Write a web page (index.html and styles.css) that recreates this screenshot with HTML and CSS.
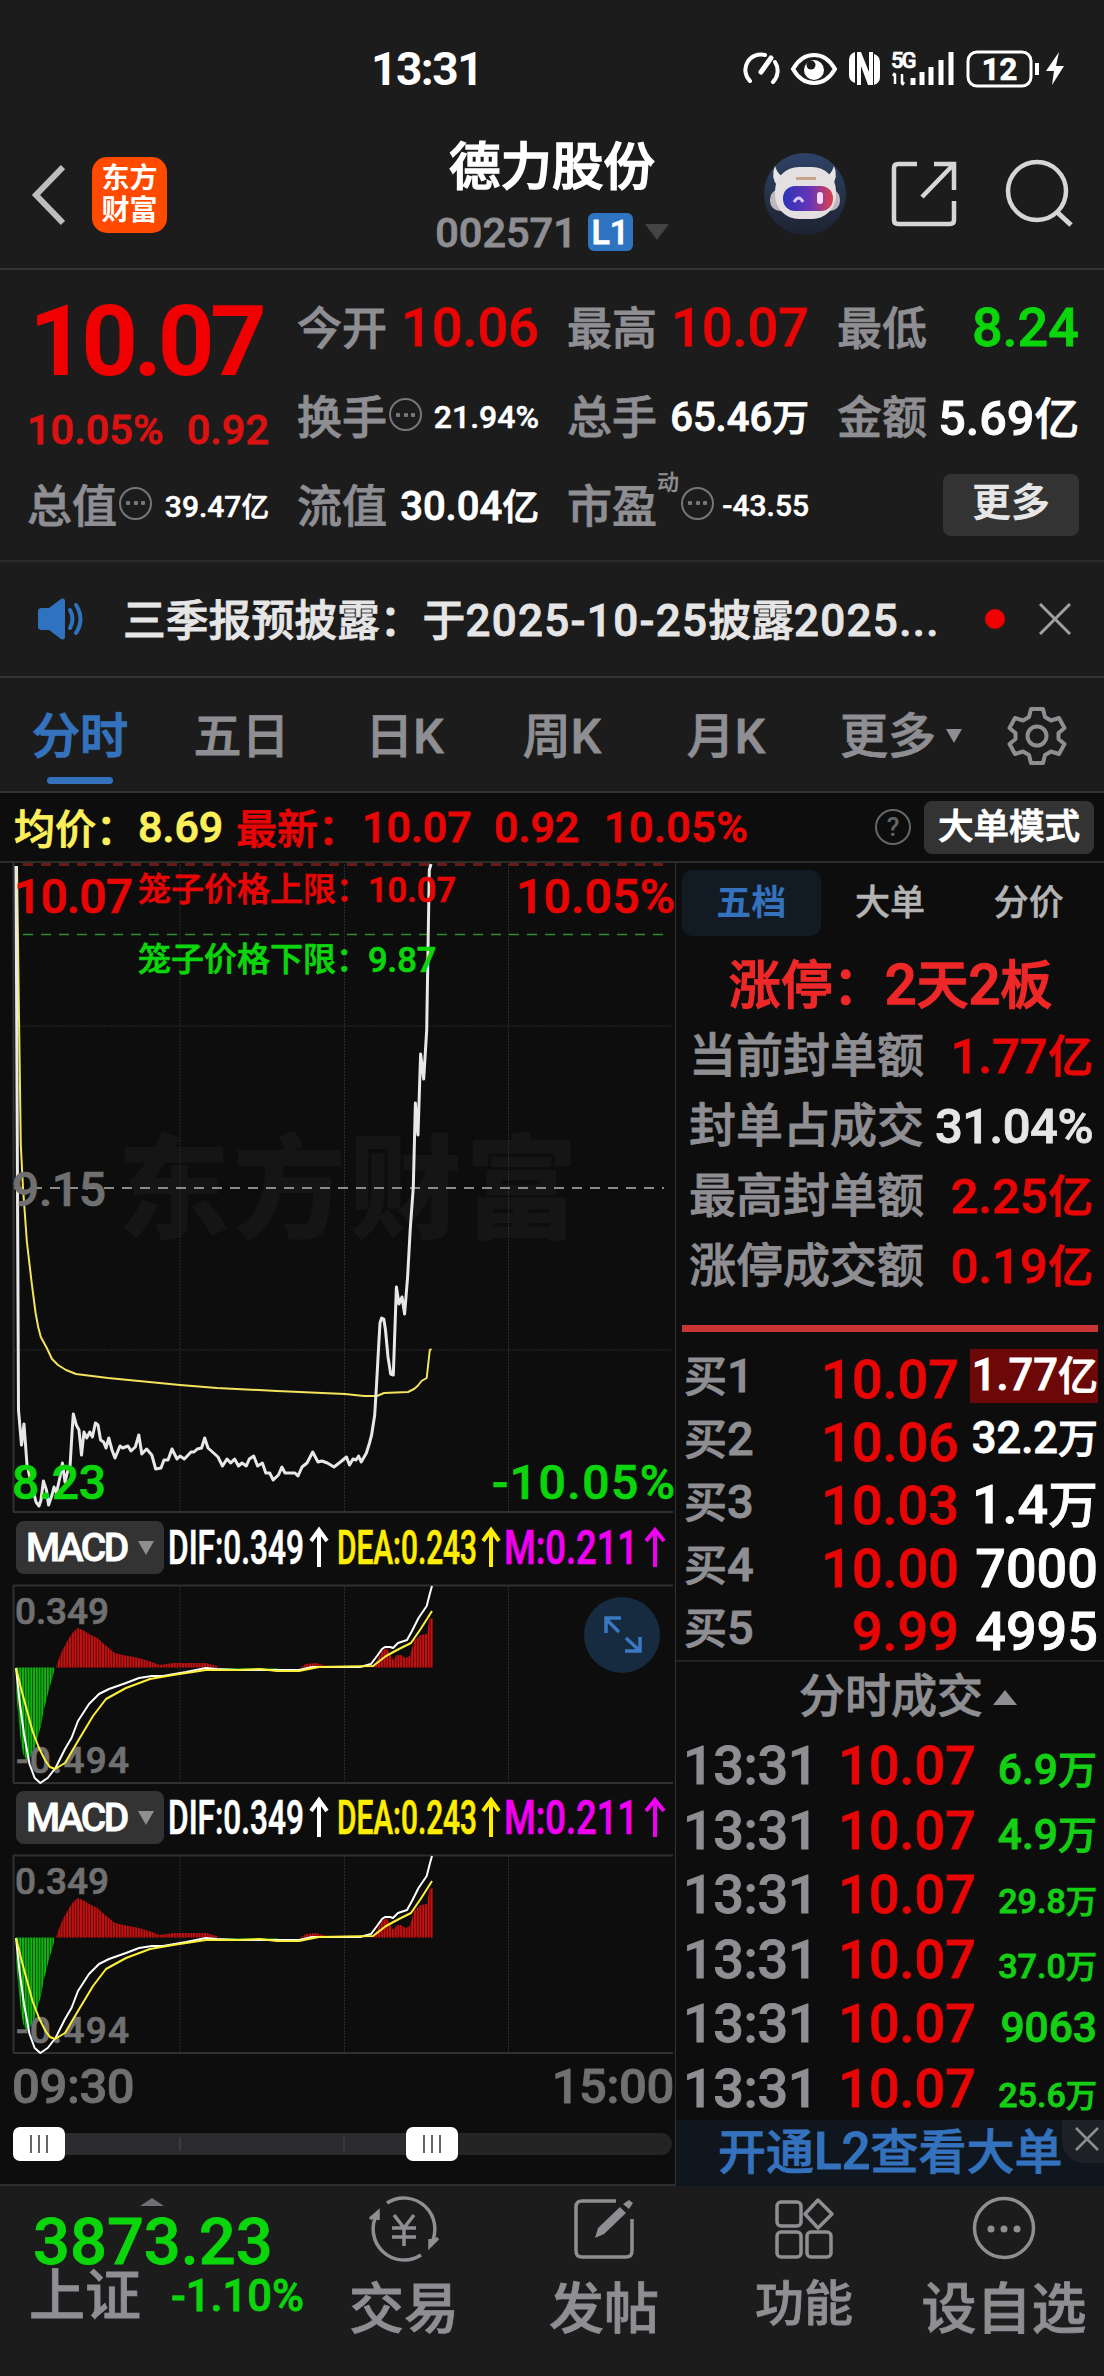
FILE: index.html
```html
<!DOCTYPE html>
<html lang="zh-CN">
<head>
    <meta charset="UTF-8">
    <meta name="viewport" content="width=device-width, initial-scale=1.0">
    <title>德力股份 002571</title>
    <link rel="stylesheet" href="styles.css">
</head>
<body>
    <!-- Status bar -->
    <div class="status-bar">
        <span class="clock">13:31</span>
        <svg class="status-icons" width="330" height="40" viewBox="740 48 330 40">
            <g fill="none" stroke="#fff" stroke-width="4" stroke-linecap="round">
                <path d="M750 80a15.500 15.500 0 0 1 15-26M775 61a16 16 0 0 1-2 20"/>
                <path d="M761 71L771 57" stroke-width="5"/>
                <path d="M793 68q8-14 21-14t21 14q-8 14-21 14t-21-14z"/>
            </g>
            <circle cx="814" cy="69" r="10" fill="#fff"/>
            <circle cx="811" cy="64" r="4.500" fill="#1c1c1c"/>
            <path d="M855 51v31q-6-2-6-8V59q0-6 6-8zM874 84V53q6 2 6 8v15q0 6-6 8zM857 51h4l8 20V51h4v33h-5l-7-19v19h-4z" fill="#fff"/>
            <text x="891" y="67" class="net">5G</text>
            <path d="M895 73v10M893 75l2-3M902 73v10M904 81l-2 3" stroke="#fff" stroke-width="2.500" fill="none"/>
            <path d="M913 77v7M922 71v13M931 66v18M941 59v25M951 51v33" stroke="#fff" stroke-width="5"/>
            <rect x="968" y="51" width="63" height="34" rx="9" fill="none" stroke="#fff" stroke-width="3"/>
            <text x="999.500" y="79" class="batt">12</text>
            <path d="M1037 62v12" stroke="#fff" stroke-width="4"/>
            <path d="M1059 51l-13 19h8l-2 14 12-19h-8z" fill="#fff"/>
        </svg>
    </div>

    <!-- Title bar -->
    <div class="header">
        <svg class="back" width="36" height="62" viewBox="0 0 36 62"><path d="M34 3L7 31l27 28" fill="none" stroke="#bdbdbd" stroke-width="6"/></svg>
        <div class="logo"><span>东方</span><span>财富</span></div>
        <div class="title">
            <h1>德力股份</h1>
            <div class="code"><span>002571</span><b>L1</b><i class="tri-down"></i></div>
        </div>
        <svg class="robot" width="84" height="84" viewBox="0 0 84 84">
            <defs>
                <linearGradient id="sky" x1="0" y1="0" x2="0" y2="1"><stop offset="0" stop-color="#2f4266"/><stop offset="1" stop-color="#1d2330"/></linearGradient>
                <linearGradient id="visor"><stop offset="0" stop-color="#2a33b8"/><stop offset=".55" stop-color="#6a35b5"/><stop offset="1" stop-color="#e0404e"/></linearGradient>
            </defs>
            <circle cx="42" cy="42" r="41" fill="url(#sky)"/>
            <path d="M12 14q-5 11 3 21l9-8q-9-3-12-13zM71 14q5 11-3 21l-9-8q9-3 12-13z" fill="#e9e6e6"/>
            <rect x="7" y="37" width="70" height="22" rx="10" fill="#bdb8bd"/>
            <rect x="12" y="15" width="61" height="52" rx="24" fill="#e4e0e2"/>
            <rect x="20" y="34" width="50" height="25" rx="12" fill="url(#visor)"/>
            <rect x="33" y="25" width="20" height="3" fill="#c9a48c"/>
            <path d="M31 50q5-8 9 0" fill="none" stroke="#d8c8ff" stroke-width="3"/>
            <rect x="54" y="40" width="6" height="12" rx="3" fill="#f3dcff"/>
        </svg>
        <svg class="share" width="66" height="66" viewBox="0 0 66 66"><path d="M26 3H7q-4 0-4 4v52q0 4 4 4h52q4 0 4-4V40M43 3h20v26M63 3L31 36" fill="none" stroke="#d6d6d6" stroke-width="4.500"/></svg>
        <svg class="search" width="68" height="70" viewBox="0 0 68 70"><circle cx="32" cy="33" r="29" fill="none" stroke="#d6d6d6" stroke-width="4.500"/><path d="M52 54l14 13" stroke="#d6d6d6" stroke-width="5"/></svg>
    </div>

    <!-- Quote -->
    <div class="quote">
        <div class="price">
            <div class="last">10.07</div>
            <div class="change"><span>10.05%</span><span>0.92</span></div>
        </div>
        <div class="cell"><label>今开</label><em class="lg red">10.06</em></div>
        <div class="cell"><label>最高</label><em class="lg red">10.07</em></div>
        <div class="cell"><label>最低</label><em class="lg green">8.24</em></div>
        <div class="cell"><label>换手<i class="more"></i></label><em class="sm">21.94%</em></div>
        <div class="cell"><label>总手</label><em class="md">65.46<small>万</small></em></div>
        <div class="cell"><label>金额</label><em class="ml">5.69<small>亿</small></em></div>
        <div class="cell"><label>总值<i class="more"></i></label><em class="xs">39.47<small>亿</small></em></div>
        <div class="cell"><label>流值</label><em class="md">30.04<small>亿</small></em></div>
        <div class="cell"><label>市盈<sup>动</sup><i class="more"></i></label><em class="xs">-43.55</em></div>
        <div class="cell end"><span class="more-btn">更多</span></div>
    </div>

    <!-- Notice -->
    <div class="notice">
        <svg width="52" height="44" viewBox="0 0 52 44"><path d="M1 14q0-3 4-3h7L24 2q4-2 4 3v34q0 5-4 3L12 33H5q-4 0-4-3z" fill="#2f72c0"/><path d="M33 13q5 9 0 18M39 8q9 14 0 28" fill="none" stroke="#2f72c0" stroke-width="4" stroke-linecap="round"/></svg>
        <p>三季报预披露：于<span>2025-10-25</span>披露<span>2025...</span></p>
        <i class="dot"></i>
        <svg width="32" height="32" viewBox="0 0 32 32"><path d="M1 1l30 30M31 1L1 31" stroke="#a0a0a0" stroke-width="3"/></svg>
    </div>

    <!-- Period tabs -->
    <div class="tabs">
        <span class="active">分时</span>
        <span>五日</span>
        <span>日K</span>
        <span>周K</span>
        <span>月K</span>
        <span>更多<i></i></span>
        <svg width="60" height="60" viewBox="-30 -30 60 60"><path d="M-6-27H6L8-19 14-15.500 22-18 27.500-8 21.500-3V3L27.500 8 22 18 14 15.500 8 19 6 27H-6L-8 19-14 15.500-22 18-27.500 8-21.500 3V-3L-27.500-8-22-18-14-15.500-8-19Z" fill="none" stroke="#8e8e93" stroke-width="4" stroke-linejoin="round"/><circle r="9.500" fill="none" stroke="#8e8e93" stroke-width="4"/></svg>
    </div>

    <!-- Average / latest -->
    <div class="avg">
        <span class="yellow">均价：</span><em class="yellow a1">8.69</em>
        <span class="red">最新：</span><em class="red a2">10.07</em><em class="red a3">0.92</em><em class="red a4">10.05%</em>
        <i class="help">?</i>
        <b class="mode">大单模式</b>
    </div>

    <div class="main">
        <!-- Charts -->
        <div class="charts">
            <svg class="trend" width="675" height="651" viewBox="0 863 675 651">
                <text x="117" y="1229" class="mark" textLength="461">东方财富</text>
                <path d="M180 864V1511M344.500 864V1511M508.500 864V1511M14 1026H672M14 1350H672" class="grid"/>
                <path d="M13.500 863V1512M13 1512H673" class="frame"/>
                <path d="M23 864.500H664" stroke="#6b1a1a" stroke-width="3" stroke-dasharray="10 8"/>
                <path d="M23 934.500H664" stroke="#2f8f2f" stroke-width="1.500" stroke-dasharray="10 8"/>
                <path d="M14 1188H664" stroke="#8a8a8a" stroke-width="2" stroke-dasharray="10 8"/>
                <polyline class="avg-line" points="17,866 19,1017 20.800,1145 23,1188 26.900,1242 31.700,1283 35.600,1313 38.200,1327 40.800,1337 46.800,1348 52,1359 58,1365 66,1370 76,1374 108,1378 139,1381 180,1385 217,1388 277,1391 345,1394 364,1396 377,1396 384,1393 408,1392 414,1389 417.600,1386 421.500,1381 426.700,1378 429.800,1350 431.500,1349"/>
                <polyline class="price-line" points="16,866 17.500,1189 18.500,1410 21.500,1445 24,1424 27,1465 31,1482 36,1502 39,1506 41,1500 43.400,1481 46.400,1490 48.600,1505 52,1495 54,1487 56.400,1493 60,1477 62.400,1463 65,1482 68,1470 70,1467 72,1433 73.300,1414 76.300,1425 79,1430 81.500,1455 84,1432 86.700,1438 89.800,1432 92.400,1437 95.400,1423 98,1425 100.600,1440 103.600,1442 106,1448 108.800,1438 112,1450 115,1458 120,1446 122.700,1448 128,1446 131,1451 135.300,1447 138.800,1435 141.800,1454 146.600,1449 151.800,1455 155.700,1469 161,1468 164,1460 168,1460 172,1449 177,1459 180,1456 184.300,1459 191,1452 194,1452 197.300,1449 201.600,1448 204.700,1438 208,1448 212.500,1452 218,1457 222.500,1466 227,1459 230.700,1463 234.600,1459 238.500,1466 242,1463 246.300,1466 249.300,1459 253.700,1456 257.600,1466 262.400,1463 265.800,1473 269.700,1473 273.200,1480 278.400,1475 281.900,1467 285,1473 295,1473 298,1476 302,1467 307,1463 312.700,1452 318,1462 321.800,1461 327.400,1463 334,1467 340.400,1462 346.500,1457 349.500,1465 353,1459 356,1460 358.600,1456 361.200,1462 366.400,1453 369.500,1443 371.600,1435 374.700,1415 376.400,1387 378.600,1347 380,1323 381.600,1318 383.800,1319 385.500,1330 388,1357 390.700,1374 393.300,1375 395,1327 396.400,1287 399,1304 402,1297 404.600,1314 407.600,1277 410.200,1230 413.300,1187 415.400,1103 418,1135 420.600,1054 423.700,1079 426.700,1030 428,950 429.300,870 431,864"/>
                <text x="14" y="913" class="axis red" textLength="119">10.07</text>
                <text x="516" y="913" class="axis red" textLength="159">10.05%</text>
                <text x="138" y="901" class="cage red">笼子价格上限：</text>
                <text x="368" y="902" class="cage-num red">10.07</text>
                <text x="138" y="971" class="cage green">笼子价格下限：</text>
                <text x="368" y="972" class="cage-num green">9.87</text>
                <text x="12" y="1206" class="axis gray" textLength="94">9.15</text>
                <text x="12" y="1499" class="axis green" textLength="94">8.23</text>
                <text x="492" y="1499" class="axis green" textLength="183">-10.05%</text>
            </svg>

            <div class="macd">
                <div class="macd-bar">
                    <span class="macd-btn">MACD<i></i></span>
                    <svg width="506" height="56" viewBox="166 1520 506 56">
                        <g class="macd-num">
                            <text x="168" y="1564" class="dif" textLength="136" lengthAdjust="spacingAndGlyphs">DIF:0.349</text>
                            <text x="337" y="1564" class="dea" textLength="140" lengthAdjust="spacingAndGlyphs">DEA:0.243</text>
                            <text x="504" y="1564" class="m" textLength="134" lengthAdjust="spacingAndGlyphs">M:0.211</text>
                        </g>
                        <g fill="none" stroke-width="4">
                            <path d="M319 1567V1530M311 1541l8-11 8 11" stroke="#fff"/>
                            <path d="M491 1567V1530M483 1541l8-11 8 11" stroke="#ffee00"/>
                            <path d="M655 1567V1530M646 1541l9-11 9 11" stroke="#f000f0"/>
                        </g>
                    </svg>
                </div>
                <svg class="macd-chart" width="675" height="202" viewBox="0 1582 675 202">
                    <defs>
                        <pattern id="rbar" width="2.760" height="10" patternUnits="userSpaceOnUse"><rect width="2" height="10" fill="#c81010"/><rect x="2" width=".76" height="10" fill="#500a0a"/></pattern>
                        <pattern id="gbar" width="2.760" height="10" patternUnits="userSpaceOnUse"><rect width="2" height="10" fill="#10b410"/><rect x="2" width=".76" height="10" fill="#0a4a0a"/></pattern>
                    </defs>
                    <g id="macdPlot">
                        <path d="M180 1585V1781M344.500 1585V1781M508.500 1585V1781" class="grid"/>
                        <path d="M673 1584.500H13.500V1782M13 1782H673" class="frame"/>
                        <path d="M16 1666.500V1690L18 1712 21 1742 23.500 1754 27 1760 31 1755 34.700 1747 38 1735 41 1725 43.500 1710 46.500 1699 49 1688 51.600 1680 54 1671V1666.500Z" fill="url(#gbar)"/>
                        <path d="M218 1667h60v2h-60z" fill="#0d6a0d"/>
                        <path d="M56 1666.500L57 1663 60 1655 63 1648 68 1639 73 1631 78 1627 84.500 1630 91 1634 97.500 1637 104 1643 115 1652 123.600 1654 138.800 1657 152 1661 159.600 1664 173.500 1662 206 1662 217 1665 220 1666.500H300L306 1663 316 1662 326 1665 330 1666.500H372L375 1663 381.600 1650 386.800 1647 390.300 1654 393.300 1659 396.800 1654 401 1654 405.500 1657 409.800 1655 414 1640 420.600 1634 427 1633 429.300 1618 433 1617V1666.500Z" fill="url(#rbar)"/>
                        <text x="15" y="1623" class="val" textLength="94">0.349</text>
                        <text x="16" y="1772" class="val" textLength="113">-0.494</text>
                        <polyline stroke="#fff" points="16,1667 19.500,1700 24,1733 29.500,1763 34.700,1777 40.300,1782 47.700,1777 55.500,1767 65,1748 71.500,1737 78,1720 89,1703 99,1693 109,1688 126,1682 139,1677 152,1675 163,1675 186,1671 206,1667 217,1668 238,1669 269,1669 299,1669 312,1666 360,1666 371,1663 377,1655 382,1648 385,1646 390,1646 393,1647 398,1642 407,1639 412,1630 418.500,1617 426.700,1605 430,1592 432,1585"/>
                        <polyline stroke="#fdf03c" points="16,1667 21.700,1690 32.500,1730 39,1747 45.500,1760 50,1766 55,1768 65,1762 78,1740 93,1715 106,1698 126,1687 150,1678 173,1674 206,1669 238,1669 260,1668 277,1670 299,1670 319,1666 373,1665 386,1655 399,1648 411,1642 420.600,1628 427,1618 432,1610"/>
                    </g>
                </svg>
                <svg class="expand" width="76" height="76" viewBox="-38 -38 76 76"><circle r="38" fill="#172b40"/><path d="M-16-2V-17H-1M-16-16L-3-3M18 2V16H3M17 15L4 3" fill="none" stroke="#3a78c3" stroke-width="3.500"/></svg>
            </div>

            <div class="macd">
                <div class="macd-bar">
                    <span class="macd-btn">MACD<i></i></span>
                    <svg width="506" height="56" viewBox="166 1520 506 56">
                        <g class="macd-num">
                            <text x="168" y="1564" class="dif" textLength="136" lengthAdjust="spacingAndGlyphs">DIF:0.349</text>
                            <text x="337" y="1564" class="dea" textLength="140" lengthAdjust="spacingAndGlyphs">DEA:0.243</text>
                            <text x="504" y="1564" class="m" textLength="134" lengthAdjust="spacingAndGlyphs">M:0.211</text>
                        </g>
                        <g fill="none" stroke-width="4">
                            <path d="M319 1567V1530M311 1541l8-11 8 11" stroke="#fff"/>
                            <path d="M491 1567V1530M483 1541l8-11 8 11" stroke="#ffee00"/>
                            <path d="M655 1567V1530M646 1541l9-11 9 11" stroke="#f000f0"/>
                        </g>
                    </svg>
                </div>
                <svg class="macd-chart" width="675" height="202" viewBox="0 1582 675 202"><use href="#macdPlot"/></svg>
            </div>

            <div class="times"><span>09:30</span><span>15:00</span></div>
            <div class="slider">
                <i class="handle"></i>
                <i class="tick"></i>
                <i class="tick"></i>
                <i class="handle right"></i>
            </div>
        </div>

        <!-- Order book -->
        <div class="book">
            <div class="book-tabs"><span class="active">五档</span><span>大单</span><span>分价</span></div>
            <div class="limit">涨停：<em>2</em>天<em>2</em>板</div>
            <div class="stat"><span>当前封单额</span><em class="red">1.77<small>亿</small></em></div>
            <div class="stat"><span>封单占成交</span><em class="tight">31.04%</em></div>
            <div class="stat"><span>最高封单额</span><em class="red">2.25<small>亿</small></em></div>
            <div class="stat"><span>涨停成交额</span><em class="red">0.19<small>亿</small></em></div>
            <div class="bar"></div>
            <div class="buys">
                <div class="buy"><span>买<b>1</b></span><em class="red">10.07</em><em class="vol s hot">1.77<small>亿</small></em></div>
                <div class="buy"><span>买<b>2</b></span><em class="red">10.06</em><em class="vol s">32.2<small>万</small></em></div>
                <div class="buy"><span>买<b>3</b></span><em class="red">10.03</em><em class="vol">1.4<small>万</small></em></div>
                <div class="buy"><span>买<b>4</b></span><em class="red">10.00</em><em class="vol">7000</em></div>
                <div class="buy"><span>买<b>5</b></span><em class="red">9.99</em><em class="vol">4995</em></div>
            </div>
            <div class="deals-title">分时成交<i></i></div>
            <div class="deals">
                <div><span>13:31</span><em>10.07</em><b>6.9<small>万</small></b></div>
                <div><span>13:31</span><em>10.07</em><b>4.9<small>万</small></b></div>
                <div><span>13:31</span><em>10.07</em><b class="s">29.8<small>万</small></b></div>
                <div><span>13:31</span><em>10.07</em><b class="s">37.0<small>万</small></b></div>
                <div><span>13:31</span><em>10.07</em><b>9063</b></div>
                <div><span>13:31</span><em>10.07</em><b class="s">25.6<small>万</small></b></div>
            </div>
            <div class="l2">
                <p>开通<em>L2</em>查看大单</p>
                <i class="close"><svg width="24" height="24" viewBox="0 0 24 24"><path d="M1 1l22 22M23 1L1 23" stroke="#8e8e8e" stroke-width="2.500"/></svg></i>
            </div>
        </div>
    </div>

    <!-- Bottom navigation -->
    <div class="nav">
        <div class="index">
            <i class="tri-up"></i>
            <div class="value">3873.23</div>
            <div class="sub"><span>上证</span><em>-1.10%</em></div>
        </div>
        <div class="item">
            <svg width="76" height="68" viewBox="-38 -34 76 68" fill="none" stroke="#8e8e93" stroke-width="3.500">
                <path d="M-17-26A31 31 0 0 1 27 15M34 9l-8 8V10M17 26A31 31 0 0 1-27-15M-34-10l8-7V-9"/>
                <path d="M-10-14L0-1 10-14M0-1V17M-12-1H12M-12 8H12"/>
            </svg>
            <span>交易</span>
        </div>
        <div class="item">
            <svg width="76" height="68" viewBox="-38 -34 76 68" fill="none" stroke="#8e8e93" stroke-width="3.500">
                <path d="M12-28H-22q-6 0-6 6V22q0 6 6 6H22q6 0 6-6V-10"/>
                <path d="M-9 9L-6-1 16-22 22-16 0 5ZM19-25L25-29 29-26 25-20Z" fill="#8e8e93" stroke="none"/>
            </svg>
            <span>发帖</span>
        </div>
        <div class="item small">
            <svg width="76" height="68" viewBox="-38 -34 76 68" fill="none" stroke="#8e8e93" stroke-width="3.500">
                <rect x="-27" y="-27" width="24" height="24" rx="4"/><rect x="-27" y="3" width="24" height="25" rx="4"/><rect x="3" y="3" width="24" height="25" rx="4"/>
                <path d="M14-29L28-15 14-1 1-15Z" stroke-linejoin="round"/>
            </svg>
            <span>功能</span>
        </div>
        <div class="item">
            <svg width="76" height="68" viewBox="-38 -34 76 68"><circle r="29.500" cy="-1" fill="none" stroke="#8e8e93" stroke-width="3.500"/><g fill="#8e8e93"><circle cx="-13" r="3.500"/><circle r="3.500"/><circle cx="13" r="3.500"/></g></svg>
            <span>设自选</span>
        </div>
    </div>
</body>
</html>
```

FILE: styles.css
```css
* {
    box-sizing: border-box;
}
body {
    margin: 0;
    width: 1104px;
    height: 2376px;
    overflow: hidden;
    background: #1c1c1c;
    color: #fff;
    font-family: Roboto, "Noto Sans CJK SC", sans-serif;
    font-weight: 500;
    -webkit-text-stroke: .8px;
}
em, i {
    font-style: normal;
}
small {
    font-size: .92em;
}
svg {
    display: block;
    flex: none;
}
svg text {
    -webkit-text-stroke: 0;
    stroke: currentColor;
    stroke-width: .7px;
}
.red {
    color: #e80505;
    fill: #e80505;
}
.green {
    color: #0bd60b;
    fill: #0bd60b;
}
.yellow {
    color: #fdf05a;
}
.gray {
    color: #707070;
    fill: #707070;
}

/* status bar */
.status-bar {
    height: 138px;
    padding: 0 34px 0 371px;
    display: flex;
    align-items: center;
    justify-content: space-between;
}
.clock {
    font-size: 46px;
    font-weight: 700;
    letter-spacing: -1.5px;
    -webkit-text-stroke: 0;
}
.net {
    font-size: 22px;
    font-weight: 500;
    fill: #fff;
    letter-spacing: -2px;
}
.batt {
    font-size: 31px;
    font-weight: 700;
    fill: #fff;
    text-anchor: middle;
}

/* header */
.header {
    height: 132px;
    border-bottom: 2px solid #333;
    display: flex;
    align-items: flex-start;
    padding-left: 29px;
}
.back {
    margin-top: 26px;
}
.logo {
    width: 75px;
    height: 76px;
    margin: 19px 0 0 27px;
    border-radius: 15px;
    background: #ff4a00;
    font-size: 28px;
    font-weight: 700;
    line-height: 32px;
    display: flex;
    flex-direction: column;
    align-items: center;
    justify-content: center;
    -webkit-text-stroke: 0;
}
.title {
    width: 598px;
    margin-left: 86px;
    display: flex;
    flex-direction: column;
    align-items: center;
}
.title h1 {
    margin: 0;
    font-size: 51.5px;
    font-weight: 500;
    line-height: 60px;
    -webkit-text-stroke: 1.4px;
}
.code {
    display: flex;
    align-items: center;
    height: 40px;
    margin-top: 14px;
    font-size: 41.5px;
    color: #8e8e93;
}
.code b {
    width: 45px;
    height: 38px;
    margin-left: 11px;
    border-radius: 6px;
    background: #2f74c0;
    color: #fff;
    font-size: 34px;
    font-weight: 500;
    line-height: 38px;
    text-align: center;
}
.tri-down {
    margin-left: 12px;
    border: 12px solid transparent;
    border-top: 16px solid #444;
    border-bottom: 0;
}
.robot {
    margin: 14px 0 0 -88px;
}
.share {
    margin: 23px 0 0 44px;
}
.search {
    margin: 20px 0 0 48px;
}

/* quote grid */
.quote {
    height: 292px;
    padding: 12px 25px 0 27px;
    border-bottom: 2px solid #2a2a2a;
    display: grid;
    grid-template-columns: 242px 242px 242px 242px;
    grid-template-rows: 90px 89px 88px;
    column-gap: 28px;
}
.price {
    grid-row: span 2;
}
.last {
    height: 117px;
    padding-left: 2px;
    line-height: 118px;
    font-size: 99px;
    font-weight: 700;
    color: #f00000;
    letter-spacing: -4.5px;
    -webkit-text-stroke: 0;
}
.change {
    display: flex;
    justify-content: space-between;
    font-size: 41.5px;
    line-height: 61px;
    color: #dc1212;
}
.cell {
    display: flex;
    align-items: center;
    justify-content: space-between;
    white-space: nowrap;
}
.cell.end {
    justify-content: flex-end;
}
.cell label {
    display: flex;
    align-items: center;
    font-size: 45px;
    color: #8e8e93;
    margin-top: -4px;
}
.cell sup {
    font-size: 22px;
    line-height: 22px;
    align-self: flex-start;
    margin-top: 1px;
    -webkit-text-stroke: .3px;
}
.more {
    width: 33px;
    height: 33px;
    border: 2px solid #77777a;
    border-radius: 50%;
    margin-left: 2px;
    background: radial-gradient(circle, #77777a 2px, transparent 2.5px) center / 8px 8px no-repeat,
        radial-gradient(circle, #77777a 2px, transparent 2.5px) 3px center / 8px 8px no-repeat,
        radial-gradient(circle, #77777a 2px, transparent 2.5px) 18px center / 8px 8px no-repeat;
}
.lg {
    font-size: 54px;
    padding-top: 1px;
}
.ml {
    font-size: 48.5px;
}
.md {
    font-size: 40px;
}
.sm {
    font-size: 32px;
}
.xs {
    font-size: 30px;
}
.md, .ml {
    margin-top: -3px;
}
.sm, .xs {
    -webkit-text-stroke: .5px;
}
.more-btn {
    width: 136px;
    height: 62px;
    border-radius: 8px;
    background: #333;
    color: #e6e6e6;
    font-size: 39px;
    font-weight: 700;
    line-height: 59px;
    text-align: center;
    -webkit-text-stroke: 0;
}

/* notice */
.notice {
    height: 116px;
    padding-left: 37px;
    border-bottom: 2px solid #333;
    display: flex;
    align-items: center;
    color: #e6e6e6;
}
.notice p {
    width: 825px;
    margin: -5px 0 0 34px;
    font-size: 42.8px;
    white-space: nowrap;
}
.notice p span {
    font-size: 44px;
    letter-spacing: 1.3px;
}
.dot {
    width: 20px;
    height: 20px;
    margin: 0 34px 0 37px;
    border-radius: 50%;
    background: #f00000;
}

/* tabs */
.tabs {
    height: 115px;
    border-bottom: 2px solid #333;
    display: grid;
    grid-template-columns: 160px 163px 163px 152px 176px 148px 1fr;
    font-size: 48px;
    line-height: 117px;
    text-align: center;
    color: #8e8e93;
}
.tabs span {
    position: relative;
    height: 115px;
}
.tabs .active {
    color: #3472bd;
    -webkit-text-stroke: 1.3px;
}
.tabs .active::after {
    content: "";
    position: absolute;
    left: 47px;
    bottom: 9px;
    width: 66px;
    height: 7px;
    border-radius: 4px;
    background: #3472bd;
}
.tabs i {
    display: inline-block;
    margin: 0 -26px 10px 10px;
    border: 8px solid transparent;
    border-top: 14px solid #8e8e93;
    border-bottom: 0;
}
.tabs svg {
    margin: 28px 0 0 45px;
}

/* avg row */
.avg {
    height: 70px;
    padding: 0 10px 0 14px;
    border-bottom: 2px solid #2c2c2c;
    background: #0d0d0d;
    display: flex;
    align-items: center;
    font-size: 41px;
    white-space: nowrap;
}
.avg span {
    width: 124px;
    margin-top: -3px;
}
.avg em {
    font-size: 43px;
}
.avg .a1 {
    width: 98px;
}
.avg .a2 {
    width: 134px;
    padding-left: 2px;
}
.avg .a3 {
    width: 110px;
}
.avg .a4 {
    width: 144px;
    letter-spacing: .5px;
}
.help {
    width: 36px;
    height: 36px;
    margin-left: auto;
    margin-right: 13px;
    border: 2px solid #666;
    border-radius: 50%;
    color: #666;
    font-size: 26px;
    line-height: 33px;
    text-align: center;
    -webkit-text-stroke: 0;
}
.mode {
    width: 170px;
    height: 53px;
    border-radius: 8px;
    background: #333;
    font-size: 35.5px;
    font-weight: 500;
    line-height: 53px;
    text-align: center;
}

.main {
    height: 1321px;
    display: flex;
    background: #0d0d0d;
}

/* charts */
.charts {
    width: 675px;
}
.charts svg {
    overflow: visible;
}
.grid {
    stroke: #2b2b2b;
    stroke-width: 1;
    stroke-dasharray: 2 1;
}
.frame {
    fill: none;
    stroke: #303030;
    stroke-width: 2;
}
svg .mark {
    font-size: 113px;
    font-weight: 900;
    fill: #151515;
    stroke: none;
}
.avg-line, .price-line, #macdPlot polyline {
    fill: none;
    stroke-width: 2;
    stroke-linejoin: round;
}
.avg-line {
    stroke: #f3e45c;
}
.price-line {
    stroke: #e8e8e8;
    stroke-width: 3;
}
.axis {
    font-size: 48px;
}
.cage {
    font-size: 33px;
}
.cage-num {
    font-size: 34.5px;
}
.macd {
    position: relative;
    height: 270px;
}
.macd-bar {
    height: 69px;
    padding: 6px 0 0 16px;
    display: flex;
    gap: 2px;
}
.macd-btn {
    width: 148px;
    height: 53px;
    margin-top: 1px;
    border-radius: 8px;
    background: #333;
    display: flex;
    align-items: center;
    padding-left: 10px;
    font-size: 39px;
    letter-spacing: -2.6px;
}
.macd-btn i {
    margin-left: 11px;
    border: 8.5px solid transparent;
    border-top: 14px solid #8e8e93;
    border-bottom: 0;
}
.macd-num {
    font-size: 48px;
}
.dif {
    color: #fff;
    fill: #fff;
}
.dea {
    color: #ffee00;
    fill: #ffee00;
}
.m {
    color: #f000f0;
    fill: #f000f0;
}
.val {
    font-size: 37px;
    color: #707070;
    fill: #707070;
}
.expand {
    position: absolute;
    left: 584px;
    top: 83px;
}
.times {
    height: 68px;
    padding: 0 1px 3px 12px;
    display: flex;
    justify-content: space-between;
    align-items: center;
    font-size: 49px;
    letter-spacing: -.4px;
    color: #707070;
}
.slider {
    width: 659px;
    height: 22px;
    margin: 11px 0 0 13px;
    border-radius: 11px;
    background: linear-gradient(90deg, #2c2c2e 420px, #242424 420px);
    display: flex;
    align-items: center;
}
.handle {
    width: 52px;
    height: 34px;
    border-radius: 7px;
    background: linear-gradient(90deg, #666 2px, transparent 2px) 17px center / 8px 18px no-repeat,
        linear-gradient(90deg, #666 2px, transparent 2px) 25px center / 8px 18px no-repeat,
        linear-gradient(90deg, #666 2px, transparent 2px) 33px center / 8px 18px no-repeat, #fff;
}
.tick {
    width: 2px;
    height: 14px;
    margin-left: 114px;
    background: #3c3c3e;
}
.tick + .tick {
    margin-left: 162px;
}
.handle.right {
    margin-left: 61px;
}

/* order book */
.book {
    flex: 1;
    border-left: 1px solid #333;
}
.book-tabs {
    display: flex;
    padding: 7px 7px 0 6px;
}
.book-tabs span {
    flex: 1;
    height: 66px;
    border-radius: 10px;
    font-size: 35px;
    line-height: 68px;
    text-align: center;
    color: #b4b4b4;
    -webkit-text-stroke: .5px;
}
.book-tabs .active {
    background: #121a23;
    color: #3472bd;
    font-weight: 700;
    -webkit-text-stroke: 0;
}
.limit {
    height: 85px;
    margin-top: 7px;
    font-size: 52px;
    line-height: 85px;
    text-align: center;
    color: #ee2828;
    -webkit-text-stroke: 1.3px;
}
.limit em {
    font-size: 56px;
}
.stat {
    height: 70px;
    padding: 0 12px 0 13px;
    display: flex;
    align-items: center;
    justify-content: space-between;
    font-size: 47px;
    line-height: 60px;
    color: #8e8e93;
}
.limit + .stat {
    margin-top: -6px;
}
.stat span {
    white-space: nowrap;
    margin-top: -3px;
}
.stat em {
    font-size: 49px;
    color: #e6e6e6;
}
.stat em.red {
    color: #e80505;
}
.stat .tight {
    letter-spacing: -.5px;
}
.bar {
    height: 7px;
    margin: 23px 7px 13px 6px;
    background: #c93434;
}
.buy {
    height: 63px;
    padding: 0 7px 0 8px;
    display: grid;
    grid-template-columns: 100px 175px 139px;
    align-items: center;
    font-size: 43px;
    color: #8e8e93;
    white-space: nowrap;
}
.buy span {
    line-height: 50px;
}
.buy b {
    font-size: 47px;
    font-weight: 500;
}
.buy em {
    font-size: 54px;
    line-height: 56px;
    text-align: right;
    padding-top: 6px;
}
.buy .vol {
    color: #fff;
}
.buy .vol.s {
    width: 128px;
    justify-self: end;
    font-size: 43.5px;
    line-height: 53px;
    padding-top: 0;
    margin-top: -1px;
}
.buy .hot {
    background: #6c0808;
}
.deals-title {
    height: 72px;
    border-top: 2px solid #222;
    display: flex;
    align-items: center;
    justify-content: center;
    padding: 0 0 2px 35px;
    font-size: 46px;
    line-height: 60px;
    color: #8e8e93;
}
.deals-title i {
    margin: 3px 0 0 10px;
    border: 12px solid transparent;
    border-bottom: 15px solid #8e8e93;
    border-top: 0;
}
.deals div {
    height: 64.6px;
    padding: 0 8px 0 7px;
    display: grid;
    grid-template-columns: 127px 166px 1fr;
    align-items: baseline;
    line-height: 67px;
    text-align: right;
    white-space: nowrap;
}
.deals span {
    font-size: 54px;
    letter-spacing: -.4px;
    color: #8e8e93;
}
.deals em {
    font-size: 54px;
    color: #e80505;
}
.deals b {
    font-size: 42.5px;
    font-weight: 500;
    color: #14cf14;
}
.deals .s {
    font-size: 34px;
}
.l2 {
    position: relative;
    height: 66px;
    background: #10161e;
    color: #3472bd;
    font-size: 48px;
    line-height: 64px;
}
.l2 p {
    margin: 0;
    padding-left: 42px;
}
.l2 em {
    font-size: 51px;
}
.close {
    position: absolute;
    right: 0;
    top: 0;
    width: 43px;
    height: 43px;
    padding: 7px 0 0 13px;
    border-bottom-left-radius: 22px;
    background: #1d2125;
}

/* bottom nav */
.nav {
    height: 192px;
    border-top: 2px solid #2e2e2e;
    display: grid;
    grid-template-columns: 304px 200px 200px 200px 200px;
    color: #8e8e93;
}
.index {
    padding-top: 12px;
}
.tri-up {
    display: block;
    width: 0;
    margin-left: 140px;
    border: 12px solid transparent;
    border-bottom: 8px solid #707074;
    border-top: 0;
}
.value {
    height: 62px;
    padding-left: 33px;
    font-size: 65px;
    line-height: 73px;
    color: #0bd60b;
}
.sub {
    display: flex;
    align-items: center;
    justify-content: space-between;
    height: 56px;
    padding-left: 29px;
    font-size: 56px;
    line-height: 50px;
}
.sub span {
    margin-top: -1px;
}
.sub em {
    padding-top: 2px;
    font-size: 43.5px;
    color: #0bd60b;
}
.item {
    display: flex;
    flex-direction: column;
    align-items: center;
    padding-top: 9px;
    font-size: 55px;
    line-height: 92px;
}
.item.small {
    font-size: 49px;
    line-height: 84px;
}
```
